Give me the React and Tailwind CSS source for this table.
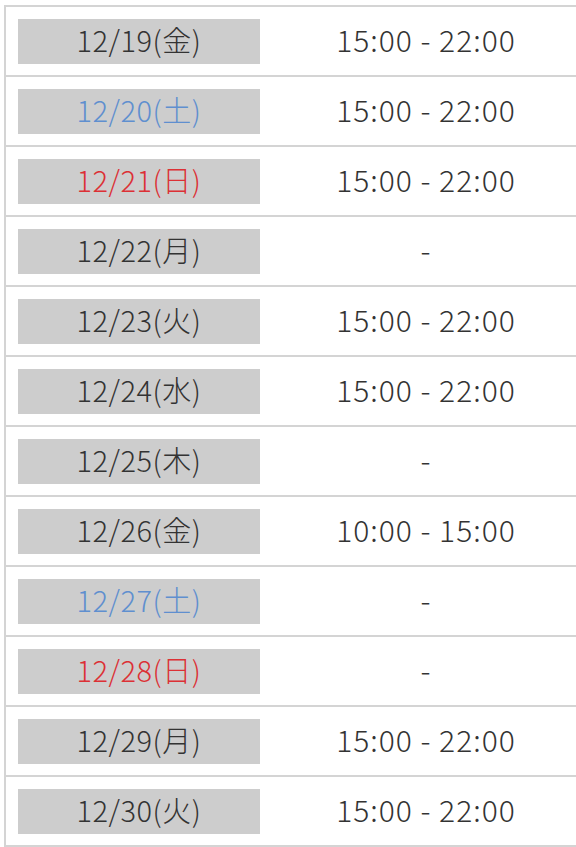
const days = [
  { date: '12/19', wd: '金', time: '15:00 - 22:00' },
  { date: '12/20', wd: '土', time: '15:00 - 22:00' },
  { date: '12/21', wd: '日', time: '15:00 - 22:00' },
  { date: '12/22', wd: '月', time: '-' },
  { date: '12/23', wd: '火', time: '15:00 - 22:00' },
  { date: '12/24', wd: '水', time: '15:00 - 22:00' },
  { date: '12/25', wd: '木', time: '-' },
  { date: '12/26', wd: '金', time: '10:00 - 15:00' },
  { date: '12/27', wd: '土', time: '-' },
  { date: '12/28', wd: '日', time: '-' },
  { date: '12/29', wd: '月', time: '15:00 - 22:00' },
  { date: '12/30', wd: '火', time: '15:00 - 22:00' },
];

function dayColor(wd) {
  if (wd === '土') return 'text-[#5f8fcf]';
  if (wd === '日') return 'text-[#dc3035]';
  return 'text-[#333333]';
}

export default function App() {
  return (
    <div
      className="w-[576px] h-[847px] overflow-hidden bg-white pt-[5px] pl-[4px]"
      style={{ fontFamily: '"Noto Sans CJK JP", "Noto Sans", sans-serif' }}
    >
      <div className="border-l-2 border-t-2 border-[#d4d4d4] w-[600px]">
        {days.map((d) => (
          <div key={d.date} className="flex h-[70px] border-b-2 border-[#d4d4d4]">
            <div className="w-[268px] flex items-center pl-[12px]">
              <div
                className={`w-[242px] h-[45px] bg-[#cdcdcd] flex items-center justify-center pb-[2px] text-[29px] tracking-[0.5px] font-light ${dayColor(d.wd)}`}
              >
                {d.date}({d.wd})
              </div>
            </div>
            <div className="w-[304px] flex items-center justify-center pb-[4px] text-[30px] font-light text-[#333333] tracking-[1px]">
              {d.time}
            </div>
          </div>
        ))}
      </div>
    </div>
  );
}
